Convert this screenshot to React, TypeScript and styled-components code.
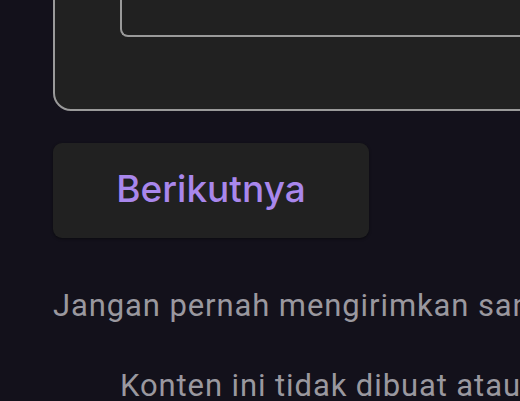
import React from "react";
import styled, { createGlobalStyle } from "styled-components";

const Global = createGlobalStyle`
  html, body {
    margin: 0;
    padding: 0;
    background: #13111b;
    overflow: hidden;
  }
  #root {
    width: 520px;
    height: 401px;
    overflow: hidden;
  }
`;

const Page = styled.div`
  width: 900px;
  padding-left: 53px;
  display: flex;
  flex-direction: column;
  align-items: flex-start;
`;

const Card = styled.section`
  box-sizing: border-box;
  width: 820px;
  margin-top: -120px;
  padding: 40px 0 72px 65px;
  background: #212121;
  border: 2px solid #9a9a9a;
  border-radius: 18px;
`;

const Field = styled.div`
  box-sizing: border-box;
  height: 115px;
  background: #212121;
  border: 2px solid #9a9a9a;
  border-right: none;
  border-radius: 8px 0 0 8px;
`;

const NextButton = styled.button`
  margin-top: 32px;
  width: 316px;
  height: 95px;
  border: none;
  border-radius: 9px;
  background: #212121;
  box-shadow: 0 1px 3px rgba(0, 0, 0, 0.45);
  color: #a987ec;
  font-family: "Inter", "Open Sans", sans-serif;
  font-weight: 500;
  font-size: 37px;
  display: flex;
  align-items: center;
  justify-content: center;
  padding: 0 0 4px;
  cursor: pointer;
`;

const Footer = styled.div`
  margin-top: 48px;
  display: flex;
  flex-direction: column;
  gap: 40px;
`;

const Note = styled.p<{ $indent?: number }>`
  margin: 0;
  padding-left: ${(p) => p.$indent ?? 0}px;
  white-space: nowrap;
  font-family: "Roboto", "Liberation Sans", sans-serif;
  font-size: 31px;
  letter-spacing: 0.9px;
  line-height: 40px;
  color: #9a989f;
`;

export default function App() {
  return (
    <>
      <Global />
      <Page>
        <Card>
          <Field />
        </Card>
        <NextButton>Berikutnya</NextButton>
        <Footer>
          <Note>Jangan pernah mengirimkan sandi melalui Google Formulir.</Note>
          <Note $indent={67}>Konten ini tidak dibuat atau disahkan oleh Google.</Note>
        </Footer>
      </Page>
    </>
  );
}
